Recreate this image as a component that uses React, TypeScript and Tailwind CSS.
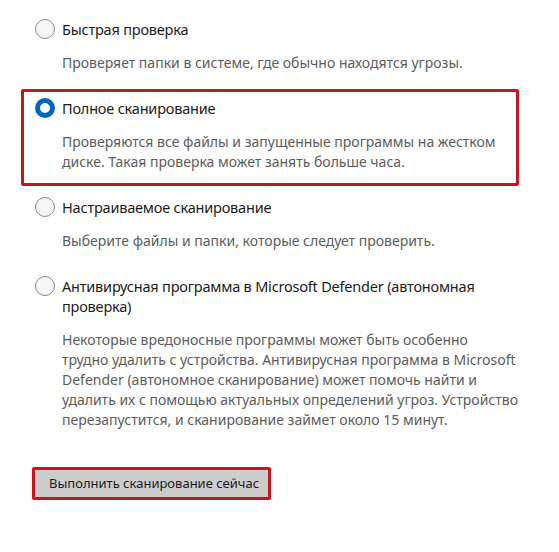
import React from "react";

type Opt = { title: string[]; desc: string[]; selected?: boolean };

const opts: Opt[] = [
  { title: ["Быстрая проверка"], desc: ["Проверяет папки в системе, где обычно находятся угрозы."] },
  {
    title: ["Полное сканирование"],
    desc: [
      "Проверяются все файлы и запущенные программы на жестком",
      "диске. Такая проверка может занять больше часа.",
    ],
    selected: true,
  },
  { title: ["Настраиваемое сканирование"], desc: ["Выберите файлы и папки, которые следует проверить."] },
  {
    title: ["Антивирусная программа в Microsoft Defender (автономная", "проверка)"],
    desc: [
      "Некоторые вредоносные программы может быть особенно",
      "трудно удалить с устройства. Антивирусная программа в Microsoft",
      "Defender (автономное сканирование) может помочь найти и",
      "удалить их с помощью актуальных определений угроз. Устройство",
      "перезапустится, и сканирование займет около 15 минут.",
    ],
  },
];

function Radio({ on }: { on?: boolean }) {
  if (on)
    return (
      <div className="w-[20px] h-[20px] rounded-full border-[5px] border-[#0067c0] bg-white shrink-0" />
    );
  return <div className="w-[20px] h-[20px] rounded-full border border-[#8a8a8a] bg-[#f6f6f6] shrink-0" />;
}

export default function App() {
  return (
    <div
      className="w-[559px] h-[552px] bg-white overflow-hidden pl-[21px] pt-[10px]"
      style={{ fontFamily: '"Noto Sans", "Open Sans", sans-serif' }}
    >
      <div className="flex flex-col gap-[2px] w-[498px]">
        {opts.map((o, i) => (
          <div
            key={i}
            className={
              "flex gap-[7px] pl-[11px] pt-[6px] pb-[11px] border-[3px] rounded-[2px] " +
              (o.selected ? "border-[#c8141c]" : "border-transparent")
            }
          >
            <div>
              <Radio on={o.selected} />
            </div>
            <div className="flex flex-col">
              <div className="text-[14.5px] tracking-[-0.2px] leading-[20px] text-[#1b1b1b] whitespace-nowrap">
                {o.title.map((t, j) => (
                  <div key={j}>{t}</div>
                ))}
              </div>
              <div className="mt-[14px] text-[14px] leading-[20px] text-[#5c5c5c] whitespace-nowrap">
                {o.desc.map((t, j) => (
                  <div key={j}>{t}</div>
                ))}
              </div>
            </div>
          </div>
        ))}
      </div>
      <div className="mt-[23px] ml-[11px] inline-flex border-[3px] border-[#c8141c] rounded-[2px]">
        <div className="bg-[#cccccc] w-[233px] h-[27px] pl-[14px] flex items-center text-[13px] text-[#1b1b1b] whitespace-nowrap">
          Выполнить сканирование сейчас
        </div>
      </div>
    </div>
  );
}
